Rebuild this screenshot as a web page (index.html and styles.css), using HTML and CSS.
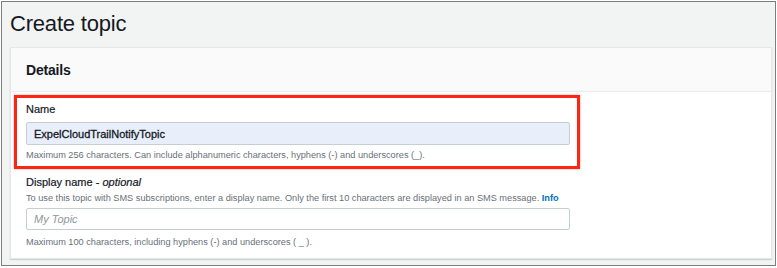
FILE: index.html
```html
<!DOCTYPE html>
<html lang="en">

<head>
	<meta charset="utf-8" />
	<title>Create topic</title>
	<link rel="stylesheet" href="styles.css">
</head>

<body>
	<div class="frame">
		<h1 class="page-title">Create topic</h1>

		<section class="card">
			<header class="card-header">
				<h2>Details</h2>
			</header>

			<div class="card-body">
				<div class="field field-marked">
					<label class="field-label" for="topic-name">Name</label>
					<input id="topic-name" class="field-input autofilled" value="ExpelCloudTrailNotifyTopic">
					<div class="field-hint">Maximum 256 characters. Can include alphanumeric characters, hyphens (-) and underscores (_).</div>
				</div>

				<div class="field">
					<label class="field-label" for="display-name">Display name - <i>optional</i></label>
					<div class="field-desc">To use this topic with SMS subscriptions, enter a display name. Only the first 10 characters are displayed in an SMS message. <a href="#" class="info">Info</a></div>
					<input id="display-name" class="field-input" placeholder="My Topic">
					<div class="field-hint hint-last">Maximum 100 characters, including hyphens (-) and underscores ( _ ).</div>
				</div>
			</div>
		</section>
	</div>
</body>

</html>
```

FILE: styles.css
```css
body {
	margin: 0;
	background: #fff;
	font-family: "Liberation Sans", Arial, sans-serif;
	color: #16191f;
}

.frame {
	margin: 1px 1px 0 1px;
	height: 263px;
	border: 1px solid #7d7d7d;
	background: #f2f3f3;
	padding: 0 3px 0 8px;
}

.page-title {
	margin: 0;
	height: 45px;
	padding-top: 9px;
	box-sizing: border-box;
	font-size: 22px;
	font-weight: normal;
	line-height: 26px;
	letter-spacing: -0.2px;
}

.card {
	background: #fff;
	border: 1px solid #e4e7e7;
	box-shadow: 0 1px 1px rgba(0, 28, 36, 0.15);
	height: 212px;
	box-sizing: border-box;
}

.card-header {
	height: 44px;
	box-sizing: border-box;
	background: #fafafa;
	border-bottom: 1px solid #eaeded;
	padding: 14px 15px 0;
}

.card-header h2 {
	margin: 0;
	font-size: 14px;
	line-height: 16px;
	font-weight: bold;
	letter-spacing: -0.2px;
}

.card-body {
	padding: 3px 0 0 3px;
}

.field {
	width: 566px;
	box-sizing: border-box;
	padding: 0 10px 0 12px;
}

.field-marked {
	border: 3px solid #fa2613;
	padding: 2px 7px 4px 9px;
	box-shadow: 0 0 2px rgba(250, 38, 19, 0.4);
}

.field-label {
	display: block;
	font-size: 11px;
	line-height: 18px;
	color: #16191f;
	-webkit-text-stroke: 0.2px #16191f;
}

.field + .field .field-label {
	margin-top: 5px;
	line-height: 17px;
}

.field-desc {
	font-size: 9.2px;
	line-height: 14px;
	color: #687078;
	white-space: nowrap;
}

.info {
	color: #0073bb;
	font-weight: bold;
	text-decoration: none;
}

.field-input {
	display: block;
	width: 100%;
	height: 23px;
	box-sizing: border-box;
	margin: 4px 0 0;
	padding: 0 7px;
	border: 1px solid #c6cfd0;
	border-radius: 2px;
	background: #fff;
	font-family: inherit;
	font-size: 11px;
	color: #16191f;
	outline: none;
}

.field-desc + .field-input {
	margin-top: 3px;
	height: 22px;
}

.autofilled {
	background: #e8effb;
	-webkit-text-stroke: 0.3px #16191f;
}

.field-input::placeholder {
	color: #8e979c;
	font-style: italic;
}

.field-hint {
	margin-top: 3px;
	font-size: 9.2px;
	line-height: 14px;
	color: #687078;
}

.hint-last {
	margin-top: 5px;
}
```
